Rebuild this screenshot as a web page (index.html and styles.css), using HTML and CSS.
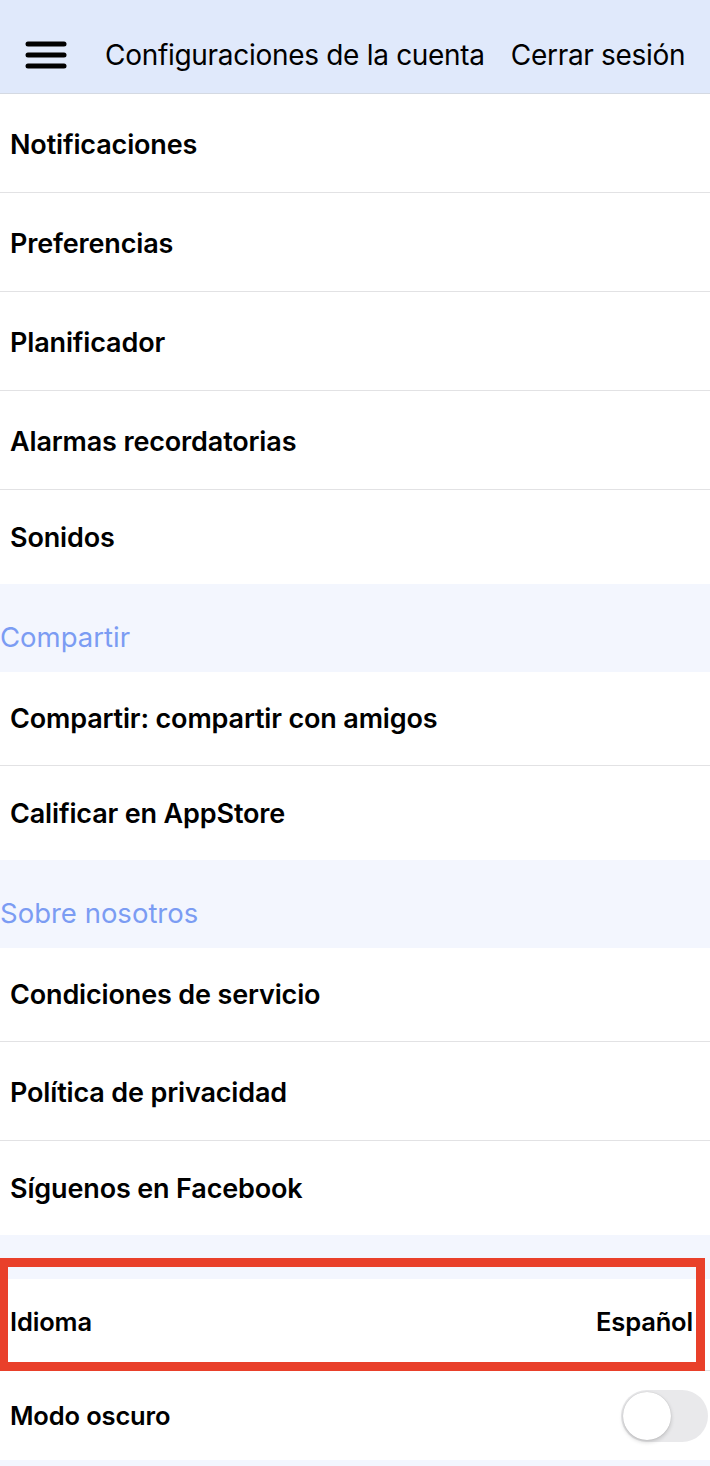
FILE: index.html
```html
<!DOCTYPE html>
<html lang="es">
<head>
    <meta charset="UTF-8">
    <meta name="viewport" content="width=device-width, initial-scale=1.0">
    <title>Configuraciones de la cuenta</title>
    <link rel="stylesheet" href="styles.css">
</head>
<body>
    <div class="page">
        <header class="topbar">
            <button class="menu-btn" aria-label="Menú">
                <svg width="42" height="28" viewBox="0 0 42 28">
                    <g stroke="#000" stroke-width="5" stroke-linecap="round">
                        <line x1="3" y1="3" x2="39" y2="3"/>
                        <line x1="3" y1="14" x2="39" y2="14"/>
                        <line x1="3" y1="25" x2="39" y2="25"/>
                    </g>
                </svg>
            </button>
            <span class="title">Configuraciones de la cuenta</span>
            <span class="logout">Cerrar sesión</span>
        </header>

        <ul class="group">
            <li class="row tall first">Notificaciones</li>
            <li class="row tall">Preferencias</li>
            <li class="row tall">Planificador</li>
            <li class="row tall">Alarmas recordatorias</li>
            <li class="row last">Sonidos</li>
        </ul>

        <div class="section-title">Compartir</div>
        <ul class="group">
            <li class="row">Compartir: compartir con amigos</li>
            <li class="row last">Calificar en AppStore</li>
        </ul>

        <div class="section-title">Sobre nosotros</div>
        <ul class="group">
            <li class="row">Condiciones de servicio</li>
            <li class="row tall">Política de privacidad</li>
            <li class="row last">Síguenos en Facebook</li>
        </ul>

        <div class="spacer"></div>
        <ul class="group">
            <li class="row setting">
                <span>Idioma</span>
                <span class="value">Español</span>
            </li>
            <li class="row setting last">
                <span>Modo oscuro</span>
                <span class="switch"><span class="knob"></span></span>
            </li>
        </ul>

        <div class="highlight"></div>
    </div>
</body>
</html>
```

FILE: styles.css
```css
:root {
    --header-bg: #e0e9fb;
    --section-bg: #f3f6fe;
    --line: #e2e2e4;
    --accent: #7b9cf3;
    --mark: #e9402a;
}

* {
    margin: 0;
    padding: 0;
    box-sizing: border-box;
}

body {
    font-family: Inter, 'Noto Sans', sans-serif;
    background-color: var(--section-bg);
    color: #000;
}

.page {
    position: relative;
    min-height: 1466px;
}

.topbar {
    display: flex;
    align-items: center;
    height: 94px;
    padding: 16px 0 0 25px;
    background-color: var(--header-bg);
    border-bottom: 1px solid #d4d9e2;
    font-size: 28px;
    letter-spacing: -0.3px;
}

.menu-btn {
    display: flex;
    background: none;
    border: none;
    margin-right: 38px;
}

.title {
    margin-right: 26px;
}

.group {
    list-style: none;
    background-color: #fff;
}

.row {
    display: flex;
    align-items: center;
    height: 94px;
    padding: 0 16px 0 10px;
    border-bottom: 1px solid var(--line);
    font-size: 27px;
    font-weight: 600;
    letter-spacing: -0.15px;
}

.row.tall {
    height: 99px;
    padding-top: 2px;
}

.row.last {
    border-bottom: none;
}

.section-title {
    display: flex;
    align-items: center;
    height: 88px;
    padding-top: 18px;
    color: var(--accent);
    font-size: 27.5px;
}

.spacer {
    height: 44px;
}

.setting {
    justify-content: space-between;
    height: 92px;
    padding-right: 17px;
    padding-bottom: 6px;
    font-size: 25.5px;
}

.setting.last {
    height: 89px;
    padding-right: 2px;
    padding-bottom: 0;
}

.switch {
    display: flex;
    align-items: center;
    width: 87px;
    height: 52px;
    padding: 2px;
    border-radius: 26px;
    background-color: #e9e9eb;
}

.knob {
    width: 48px;
    height: 48px;
    border-radius: 50%;
    background-color: #fff;
    box-shadow: 0 2px 4px rgba(0, 0, 0, 0.18), 0 0 1px rgba(0, 0, 0, 0.2);
}

.highlight {
    position: absolute;
    left: -1px;
    top: 1258px;
    width: 706px;
    height: 113px;
    border: 9px solid var(--mark);
    pointer-events: none;
}
```
